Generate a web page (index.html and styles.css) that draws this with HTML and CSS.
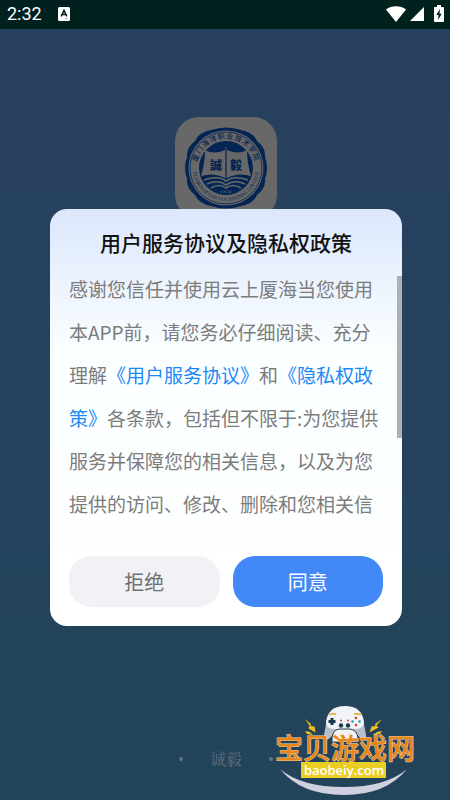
FILE: index.html
```html
<!DOCTYPE html>
<html lang="zh-CN">
<head>
<meta charset="utf-8">
<meta name="viewport" content="width=device-width, initial-scale=1">
<title>云上厦海</title>
<link rel="stylesheet" href="styles.css">
</head>
<body>
<div class="screen">
  <header class="status">
    <span class="clock">2:32</span>
    <svg class="notice" width="12" height="14" viewBox="0 0 12 14" aria-hidden="true"><rect width="12" height="14" rx="1.5" fill="#fff"/><path d="M3.2 9.4 6 3.2l2.8 6.2M4.2 7.5h3.6" fill="none" stroke="#00211d" stroke-width="1.5"/><path d="M7 11.7h3" stroke="#8a9996" stroke-width=".7"/></svg>
    <svg class="wifi" width="20" height="16" viewBox="0 0 20 16" aria-hidden="true"><path d="M0 3.500C5.500-.8 14.500-.8 20 3.500L10 16Z" fill="#fff"/></svg>
    <svg class="signal" width="14" height="14" viewBox="0 0 14 14" aria-hidden="true"><path d="M14 0v14H0Z" fill="#fff"/></svg>
    <svg class="battery" width="10" height="17" viewBox="0 0 10 17" aria-hidden="true"><path d="M3 0h4v2h2q1 0 1 1v13q0 1-1 1H1q-1 0-1-1V3q0-1 1-1h2Z" fill="#fff"/><path d="M6 4 2.300 10h2.200L4 15l3.700-6.200H5.500Z" fill="#00211d"/></svg>
  </header>

  <main class="splash">
    <div class="tile">
      <svg width="84" height="84" viewBox="-42 -42 84 84" role="img" aria-label="校徽">
        <defs>
          <path id="arc-top" d="M-28.800 6A29.400 29.400 0 1 1 28.800 6"/>
          <path id="arc-bottom" d="M-32-8A33 33 0 1 0 32-8"/>
        </defs>
        <path d="M-15-38Q0-43 15-38Q27-36 31-27Q40-20 39-11Q43 0 39 11Q40 20 31 27Q27 36 15 38Q0 43-15 38Q-27 36-31 27Q-40 20-39 11Q-43 0-39-11Q-40-20-31-27Q-27-36-15-38Z" fill="#042553"/>
        <circle r="37.500" fill="#686868"/>
        <circle r="36" fill="none" stroke="#042553" stroke-width=".8"/>
        <circle r="27" fill="#042553"/>
        <text class="seal-cn"><textPath href="#arc-top" startOffset="50%" text-anchor="middle">厦门海洋职业技术学院</textPath></text>
        <text class="seal-en"><textPath href="#arc-bottom" startOffset="50%" text-anchor="middle">XIAMEN OCEAN VOCATIONAL COLLEGE</textPath></text>
        <path d="M-21-18Q-12-13-1-18V10Q-12 4-25 8Q-21-5-21-18ZM21-18Q12-13 1-18V10Q12 4 25 8Q21-5 21-18Z" fill="#686868"/>
        <path d="M0-21V10" stroke="#686868" stroke-width=".8"/>
        <path d="M-22 12Q-8 7 0 13Q8 7 22 12M-19 16Q-8 11 0 17Q8 11 19 16M-15 20Q-7 15 0 20Q7 15 15 20" fill="none" stroke="#686868" stroke-width="1.600"/>
        <text class="seal-word" x="-10" y="2" text-anchor="middle">誠</text>
        <text class="seal-word" x="10" y="2" text-anchor="middle">毅</text>
        <text class="seal-year" x="0" y="25" text-anchor="middle">1920</text>
      </svg>
    </div>
    <p class="motto"><i></i><span>诚毅</span><i></i></p>
  </main>

  <div class="overlay">
    <section class="dialog" role="dialog" aria-modal="true" aria-labelledby="dialog-title">
      <h1 id="dialog-title">用户服务协议及隐私权政策</h1>
      <div class="terms">
        <p>感谢您信任并使用云上厦海当您使用本APP前，请您务必仔细阅读、充分理解<a href="#service">《用户服务协议》</a>和<a href="#privacy">《隐私权政策》</a>各条款，包括但不限于:为您提供服务并保障您的相关信息，以及为您提供的访问、修改、删除和您相关信</p>
        <span class="thumb"></span>
      </div>
      <div class="actions">
        <button type="button" class="decline">拒绝</button>
        <button type="button" class="accept">同意</button>
      </div>
    </section>
  </div>

  <div class="watermark">
    <svg width="144" height="96" viewBox="0 0 144 96" role="img" aria-label="宝贝游戏网 baobeiy.com">
      <path d="M6 65Q27 83 70 83Q112 83 133 65Q112 91 70 91Q27 91 6 65Z" fill="#d0d1e0"/>
      <path d="M53 15H89L92 31Q93 39 86 34L80 27H62L56 34Q49 39 50 31Z" fill="#b7bdcb"/>
      <path d="M52 18Q54 2 71 2Q88 2 90 18Q90 25 82 25H60Q52 25 52 18Z" fill="#f2f3f7"/>
      <path d="M58 34Q59 25 66 25H76Q83 26 84 34V38H58Z" fill="#f2f3f7" stroke="#273c50" stroke-width="1"/>
      <path d="M55 11q3-2 7-1M80 10q4-1 7 1" fill="none" stroke="#e4a925" stroke-width="1.500"/>
      <path d="M58 14v7M54.500 17.500h7" stroke="#143b4c" stroke-width="3"/>
      <g fill="#173d50"><circle cx="67" cy="21.500" r="2.200"/><circle cx="74" cy="21.500" r="2.200"/></g>
      <g fill="#d83b42"><circle cx="67" cy="16.500" r="1"/><circle cx="74" cy="16.500" r="1"/><circle cx="82" cy="14" r="1.300"/><circle cx="82" cy="21" r="1.300"/></g>
      <g fill="#2b9db1"><circle cx="78.500" cy="17.500" r="1.300"/><circle cx="85.500" cy="17.500" r="1.300"/></g>
      <path d="m31 15 6 5-.5 2 4 .5 1 6-7-4 1-3ZM108 15l-7 5 .5 2-4 .5-2 6 9-5-2-2ZM31 27l5 1 3 3-6-1ZM108 27l-5 1-4 3 7-1Z" fill="#efbd1f"/>
      <rect x="27" y="58" width="85" height="16" fill="#eace24"/>
      <text class="brand" x="71" y="55" text-anchor="middle">宝贝游戏网</text>
      <text class="domain" x="70" y="71" text-anchor="middle">baobeiy.com</text>
    </svg>
  </div>
</div>
</body>
</html>
```
FILE: styles.css
```css
* {
  box-sizing: border-box;
}

body {
  margin: 0;
  font-family: "Noto Sans CJK SC", sans-serif;
}

.screen {
  position: relative;
  display: flex;
  flex-direction: column;
  min-height: 100vh;
  overflow: hidden;
  background: linear-gradient(#28405f, #22445a);
}

.status {
  display: flex;
  align-items: center;
  height: 29px;
  padding: 0 6px 2px 7px;
  background: #00211d;
  color: #fff;
}

.clock {
  font: 400 18px/28px Roboto, sans-serif;
}

.notice {
  margin-left: 16px;
}

.wifi {
  margin-left: auto;
}

.signal {
  margin: 0 10px 0 4px;
}

.splash {
  flex: 1;
  display: flex;
  flex-direction: column;
  align-items: center;
  justify-content: space-between;
  padding: 88px 0 28px 2px;
}

.tile {
  display: grid;
  place-items: center;
  width: 102px;
  height: 102px;
  border-radius: 24px;
  background: #686868;
}

.seal-cn {
  font: 500 7px "Noto Sans CJK SC", sans-serif;
  letter-spacing: 1px;
  fill: #042553;
}

.seal-en {
  font: 400 5px "Liberation Serif", serif;
  fill: #042553;
}

.seal-word {
  font: 900 12px "Noto Sans CJK TC", sans-serif;
  fill: #042553;
}

.seal-year {
  font: 4px "Liberation Serif", serif;
  letter-spacing: 1px;
  fill: #8a8a8a;
}

.motto {
  display: flex;
  align-items: center;
  gap: 27px;
  margin: 0;
  color: #5b6872;
  font: 500 16px/26px "Noto Serif CJK SC", "Noto Sans CJK SC", serif;
}

.motto i {
  width: 4px;
  height: 4px;
  border-radius: 50%;
  background: #66727a;
}

.overlay {
  position: absolute;
  inset: 0;
  display: flex;
  align-items: center;
  padding: 35px 48px 0 50px;
}

.dialog {
  width: 100%;
  padding: 16px 0 19px;
  border-radius: 17px;
  background: linear-gradient(#dce7fc, #fbffff 35%, #fff);
}

h1 {
  margin: 0;
  color: #111;
  font-size: 21px;
  font-weight: 500;
  line-height: 34px;
  text-align: center;
}

.terms {
  position: relative;
  padding: 8px 18px 0 19px;
}

.terms p {
  margin: 0;
  color: #7c7c7c;
  font-size: 19px;
  font-weight: 400;
  line-height: 43px;
}

.terms a {
  color: #1c88f6;
  text-decoration: none;
}

.thumb {
  position: absolute;
  top: 17px;
  right: 0;
  width: 5px;
  height: 162px;
  background: #acb1b2;
}

.actions {
  display: flex;
  gap: 13px;
  padding: 31px 19px 0;
}

.actions button {
  flex: 1;
  height: 51px;
  border: 0;
  border-radius: 22px;
  font: 400 20px/30px "Noto Sans CJK SC", sans-serif;
}

.decline {
  background: #f1f1f6;
  color: #707070;
}

.accept {
  background: #4289f7;
  color: #fff;
}

.watermark {
  position: absolute;
  right: 32px;
  bottom: 0;
  line-height: 0;
}

.brand {
  font: 500 28px "Noto Sans CJK SC", sans-serif;
  fill: #e6861b;
  stroke: #f3d3a4;
  stroke-width: 1px;
  paint-order: stroke;
}

.domain {
  font: 600 13px "Open Sans", sans-serif;
  fill: #fff;
}
```
